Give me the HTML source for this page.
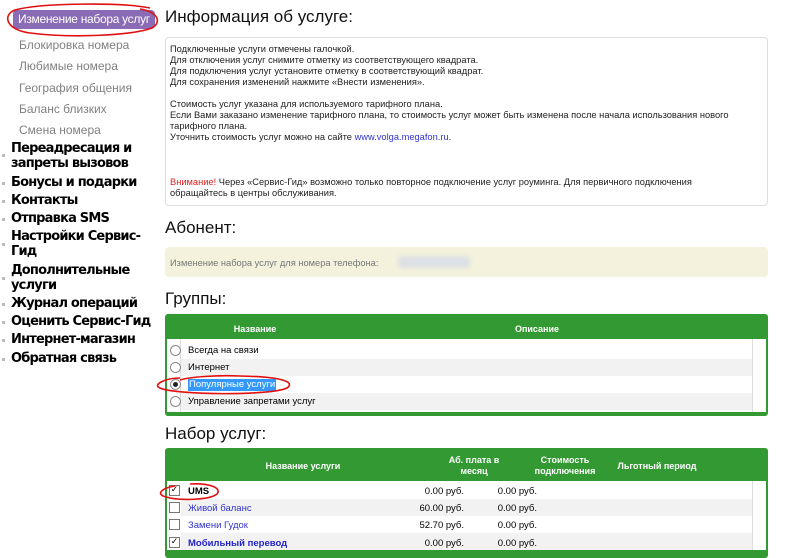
<!DOCTYPE html>
<html><head><meta charset="utf-8"><style>
*{margin:0;padding:0;box-sizing:border-box}
body{width:800px;height:550px;overflow:hidden;background:#fff;font-family:"DejaVu Sans","Liberation Sans",sans-serif;position:relative;color:#000}
.a{position:absolute;white-space:nowrap}
.pill{left:13px;top:10px;width:142px;height:19px;background:#8a6bb5;border-radius:4px;color:#fff;font-size:12px;line-height:19px;padding-left:5px;font-family:"Liberation Sans",sans-serif;letter-spacing:-0.3px}
.sub{left:19px;font-size:12px;color:#808080;font-family:"Liberation Sans",sans-serif}
.nav{left:11px;font-size:13px;font-weight:bold;line-height:15px;font-family:"DejaVu Sans",sans-serif;letter-spacing:-0.8px}
.dot{left:2px;width:3px;height:3px;background:#bbb}
.h{left:165px;font-size:17px;font-family:"Liberation Sans",sans-serif;color:#111}
.box{left:165px;top:37px;width:603px;height:169px;border:1px solid #ddd;border-radius:4px}
.info{left:170px;font-size:9.3px;line-height:11px;color:#222;font-family:"Liberation Sans",sans-serif}
.tbl{left:165px;width:603px;background:#339933;border-radius:3px}
.th{color:#fff;font-weight:bold;font-size:9px;text-align:center;line-height:11px;font-family:"Liberation Sans",sans-serif}
.row{left:167px;width:585px;height:17px;font-size:9.5px;line-height:17px;font-family:"Liberation Sans",sans-serif}
.rb{left:170px;width:11px;height:11px;border:1px solid #888;border-radius:50%;background:#fff}
.cb{left:169px;width:11px;height:11px;border:1px solid #777;background:#fff;font-size:9px;line-height:9px;text-align:center}
.num{font-size:9.5px;text-align:right;font-family:"Liberation Sans",sans-serif}
</style></head><body>
<div class="a pill">Изменение набора услуг</div>
<div class="a sub" style="top:38px">Блокировка номера</div>
<div class="a sub" style="top:59px">Любимые номера</div>
<div class="a sub" style="top:81px">География общения</div>
<div class="a sub" style="top:102px">Баланс близких</div>
<div class="a sub" style="top:123px">Смена номера</div>
<div class="a nav" style="top:141px">Переадресация и<br>запреты вызовов</div>
<div class="a nav" style="top:175px">Бонусы и подарки</div>
<div class="a nav" style="top:193px">Контакты</div>
<div class="a nav" style="top:211px">Отправка SMS</div>
<div class="a nav" style="top:229px">Настройки Сервис-<br>Гид</div>
<div class="a nav" style="top:263px">Дополнительные<br>услуги</div>
<div class="a nav" style="top:296px">Журнал операций</div>
<div class="a nav" style="top:314px">Оценить Сервис-Гид</div>
<div class="a nav" style="top:332px">Интернет-магазин</div>
<div class="a nav" style="top:351px">Обратная связь</div>
<div class="a dot" style="top:154px"></div><div class="a dot" style="top:182px"></div><div class="a dot" style="top:200px"></div><div class="a dot" style="top:218px"></div><div class="a dot" style="top:243px"></div><div class="a dot" style="top:277px"></div><div class="a dot" style="top:303px"></div><div class="a dot" style="top:321px"></div><div class="a dot" style="top:339px"></div><div class="a dot" style="top:358px"></div>

<div class="a h" style="top:7px">Информация об услуге:</div>
<div class="a box"></div>
<div class="a info" style="top:44px">Подключенные услуги отмечены галочкой.<br>Для отключения услуг снимите отметку из соответствующего квадрата.<br>Для подключения услуг установите отметку в соответствующий квадрат.<br>Для сохранения изменений нажмите «Внести изменения».<br><br>Стоимость услуг указана для используемого тарифного плана.<br>Если Вами заказано изменение тарифного плана, то стоимость услуг может быть изменена после начала использования нового<br>тарифного плана.<br>Уточнить стоимость услуг можно на сайте <span style="color:#3333cc">www.volga.megafon.ru</span>.</div>
<div class="a info" style="top:177px"><span style="color:#e02020">Внимание!</span> Через «Сервис-Гид» возможно только повторное подключение услуг роуминга. Для первичного подключения<br>обращайтесь в центры обслуживания.</div>

<div class="a h" style="top:218px">Абонент:</div>
<div class="a" style="left:165px;top:247px;width:603px;height:30px;background:#f4f2dd;border-radius:4px"></div>
<div class="a info" style="top:258px;color:#777">Изменение набора услуг для номера телефона:</div>
<div class="a" style="left:398px;top:256px;width:72px;height:12px;background:#dde0e4;border-radius:4px;filter:blur(2px)"></div>

<div class="a h" style="top:289px">Группы:</div>
<div class="a tbl" style="top:314px;height:102px"></div>
<div class="a th" style="left:205px;top:324px;width:100px">Название</div>
<div class="a th" style="left:487px;top:324px;width:100px">Описание</div>
<div class="a" style="left:167px;top:339px;width:599px;height:73px;background:#fff"></div>
<div class="a" style="left:752px;top:339px;width:1px;height:73px;background:#ddd"></div>
<div class="a" style="left:180px;top:339px;width:1px;height:73px;background:#ddd"></div>
<div class="a" style="left:181px;top:359px;width:571px;height:17px;background:#f2f2f2"></div>
<div class="a" style="left:181px;top:393px;width:571px;height:17px;background:#f2f2f2"></div>
<div class="a rb" style="top:345px"></div><div class="a row" style="left:188px;top:342px">Всегда на связи</div>
<div class="a rb" style="top:362px"></div><div class="a row" style="left:188px;top:359px">Интернет</div>
<div class="a rb" style="top:379px"><div style="width:5px;height:5px;background:#222;border-radius:50%;margin:2px"></div></div>
<div class="a" style="left:188px;top:379px;height:12px;font-size:9.5px;line-height:12px;background:#3399ff;color:#fff;padding:0 1px;font-family:'Liberation Sans',sans-serif">Популярные услуги</div>
<div class="a rb" style="top:396px"></div><div class="a row" style="left:188px;top:393px">Управление запретами услуг</div>

<div class="a h" style="top:424px">Набор услуг:</div>
<div class="a tbl" style="top:448px;height:110px"></div>
<div class="a th" style="left:243px;top:461px;width:120px">Название услуги</div>
<div class="a th" style="left:434px;top:455px;width:80px">Аб. плата в<br>месяц</div>
<div class="a th" style="left:525px;top:455px;width:80px">Стоимость<br>подключения</div>
<div class="a th" style="left:612px;top:461px;width:90px">Льготный период</div>
<div class="a" style="left:167px;top:481px;width:599px;height:69px;background:#fff"></div>
<div class="a" style="left:752px;top:481px;width:1px;height:69px;background:#ddd"></div>
<div class="a" style="left:181px;top:499px;width:571px;height:17px;background:#f2f2f2"></div>
<div class="a" style="left:181px;top:533px;width:571px;height:17px;background:#f2f2f2"></div>
<div class="a cb" style="top:485px">✓</div><div class="a row" style="left:188px;top:483px;font-weight:bold">UMS</div>
<div class="a cb" style="top:502px"></div><div class="a row" style="left:188px;top:500px;color:#3333cc">Живой баланс</div>
<div class="a cb" style="top:519px"></div><div class="a row" style="left:188px;top:517px;color:#3333cc">Замени Гудок</div>
<div class="a cb" style="top:537px">✓</div><div class="a row" style="left:188px;top:535px;color:#2222cc;font-weight:bold">Мобильный перевод</div>
<div class="a num" style="left:404px;width:60px;top:486px">0.00 руб.</div><div class="a num" style="left:477px;width:60px;top:486px">0.00 руб.</div>
<div class="a num" style="left:404px;width:60px;top:503px">60.00 руб.</div><div class="a num" style="left:477px;width:60px;top:503px">0.00 руб.</div>
<div class="a num" style="left:404px;width:60px;top:520px">52.70 руб.</div><div class="a num" style="left:477px;width:60px;top:520px">0.00 руб.</div>
<div class="a num" style="left:404px;width:60px;top:538px">0.00 руб.</div><div class="a num" style="left:477px;width:60px;top:538px">0.00 руб.</div>

<svg class="a" style="left:0;top:0" width="800" height="550">
<g fill="none" stroke="#e01010" stroke-width="1.6">
<path d="M150 8 C120 2 40 3 15 10 C2 15 6 30 30 33 C70 38 130 36 152 28 C162 22 158 12 140 9"/>
<path d="M180 378 C165 378 152 385 160 388 C175 395 270 396 287 388 C294 383 288 377 240 376 C215 375 190 377 180 380"/>
<path d="M175 486 C162 488 155 494 166 497 C180 501 210 500 217 494 C222 488 210 483 190 484"/>
</g></svg>
</body></html>
